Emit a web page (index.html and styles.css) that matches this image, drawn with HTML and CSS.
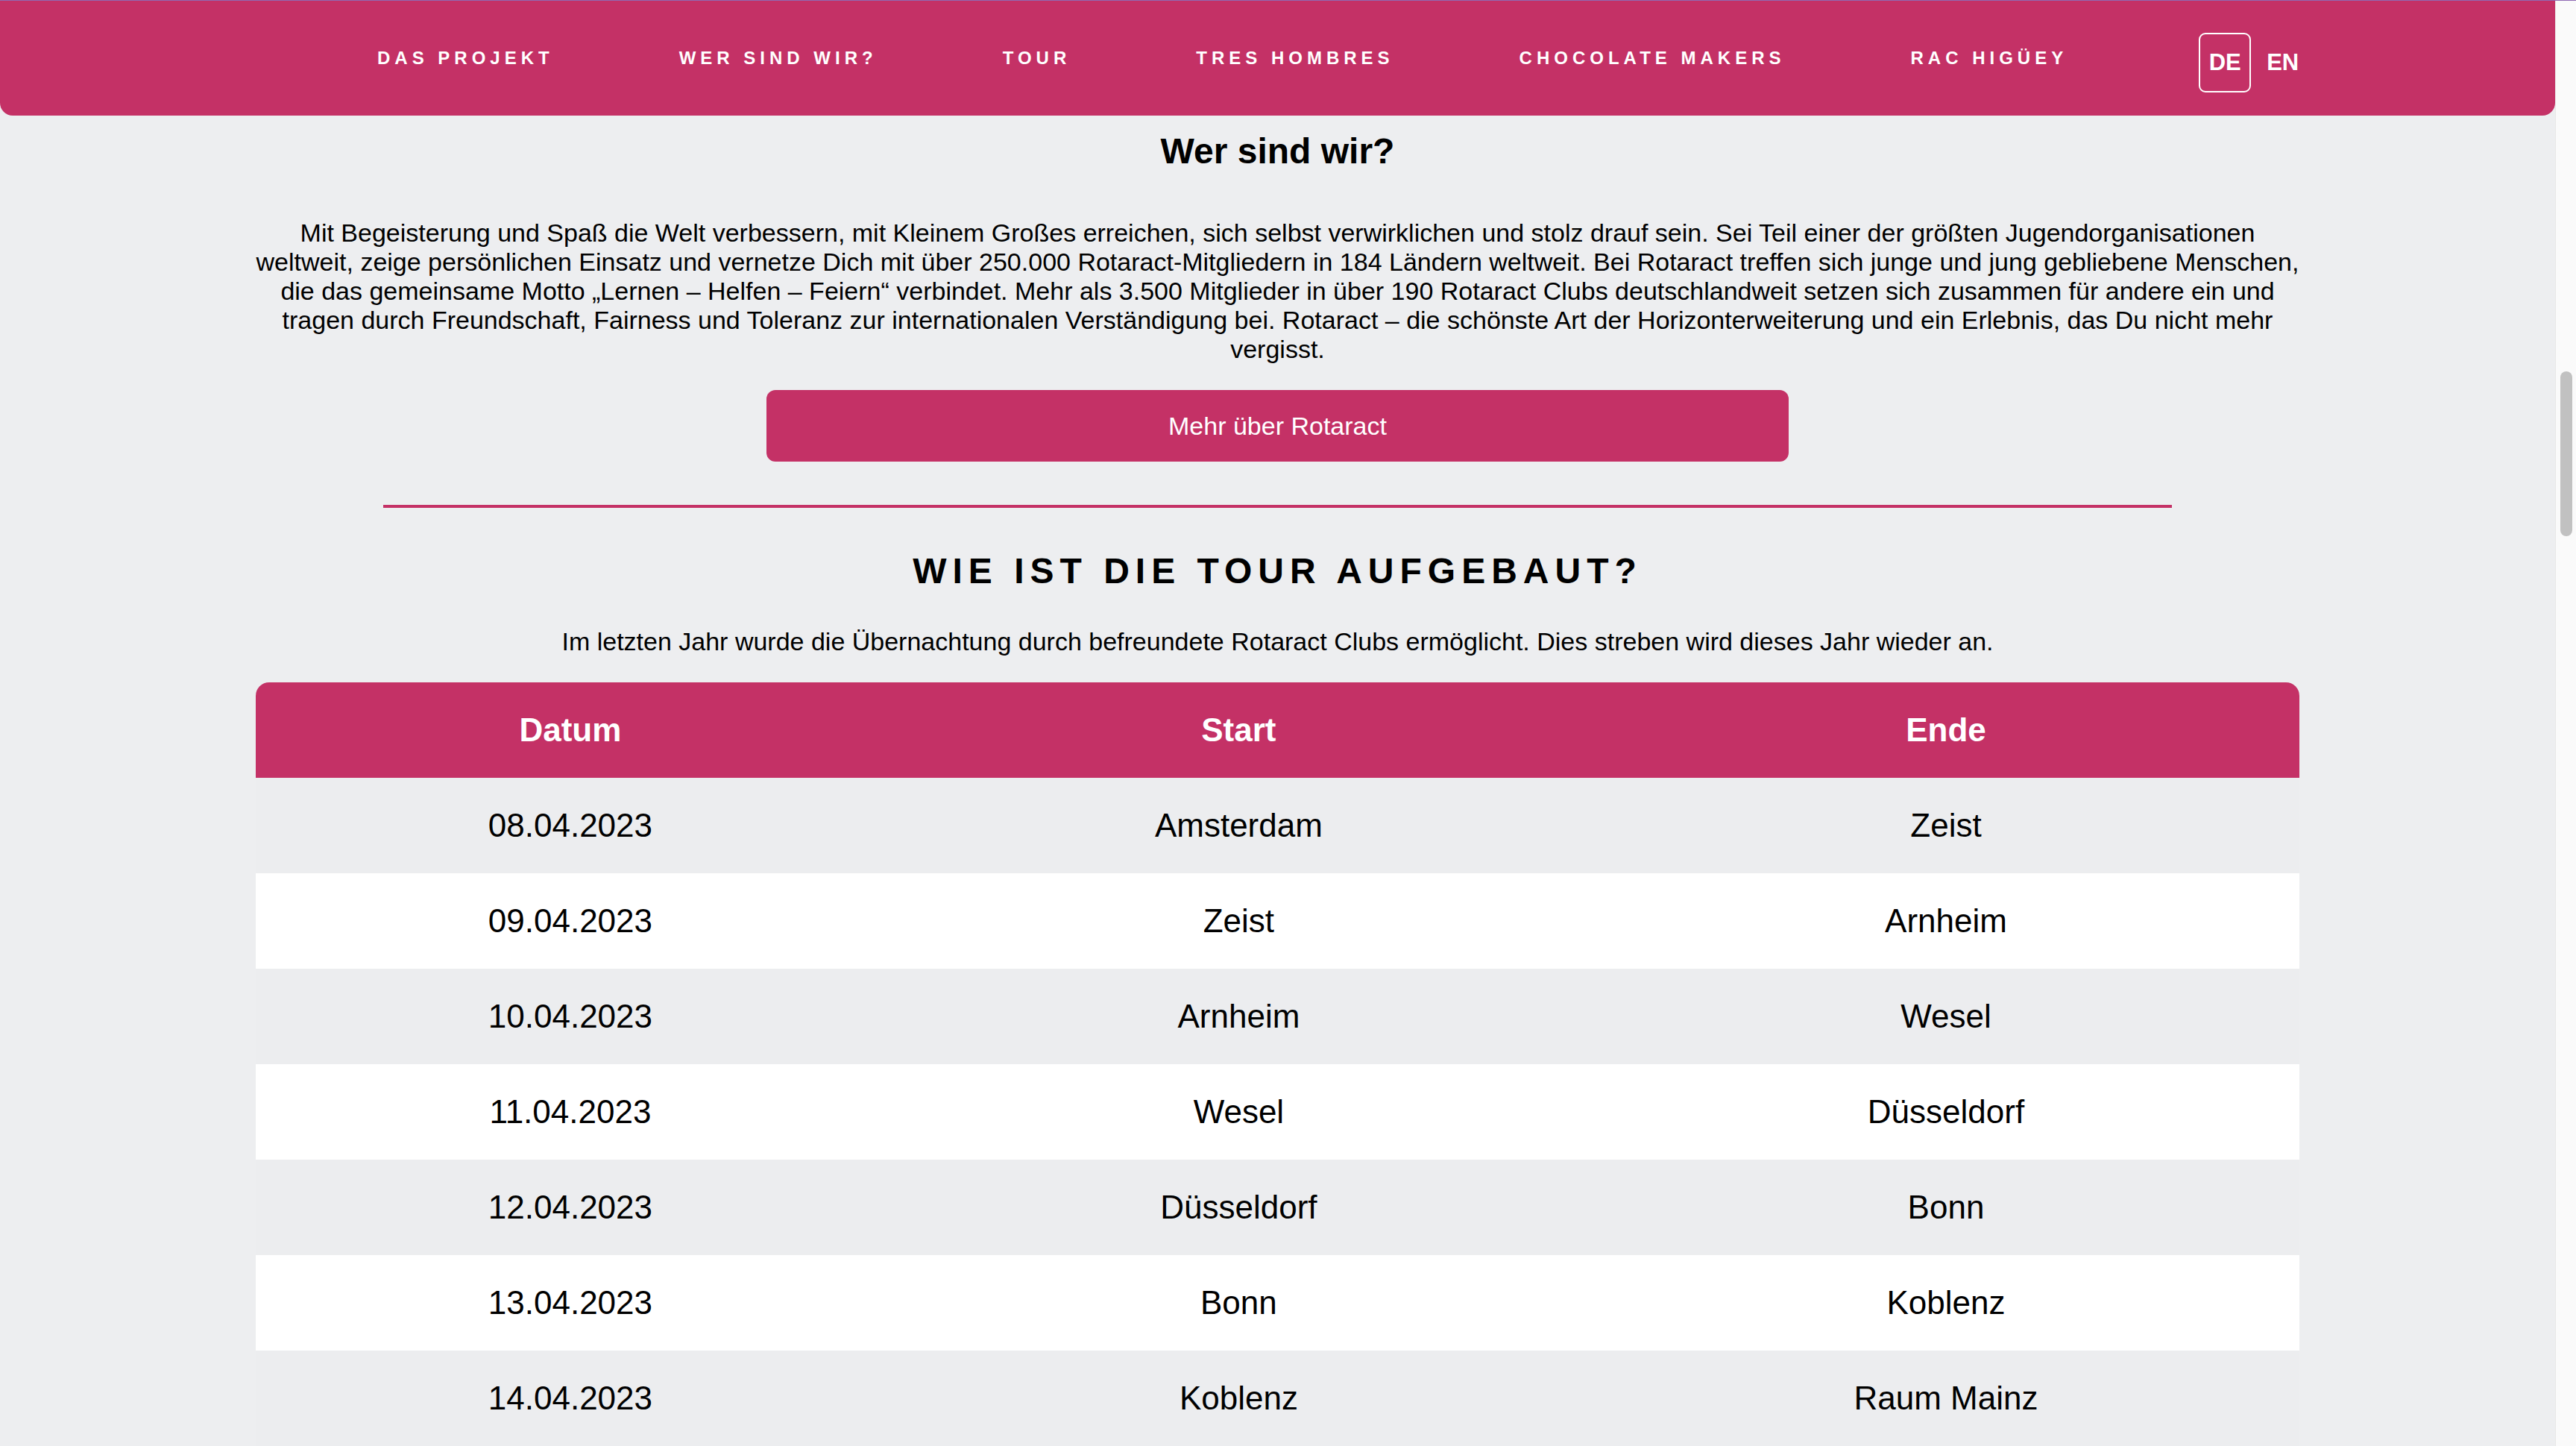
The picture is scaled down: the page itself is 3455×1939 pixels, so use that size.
FILE: index.html
```html
<!DOCTYPE html>
<html lang="de">
<head>
<meta charset="utf-8">
<title>Wer sind wir?</title>
<link rel="stylesheet" href="styles.css">
</head>
<body>
<div class="topline"></div>
<div class="viewport">
  <div class="page">
    <nav class="nav">
      <div class="nav-links">
        <a class="nav-link">DAS PROJEKT</a>
        <a class="nav-link">WER SIND WIR?</a>
        <a class="nav-link">TOUR</a>
        <a class="nav-link">TRES HOMBRES</a>
        <a class="nav-link">CHOCOLATE MAKERS</a>
        <a class="nav-link">RAC HIGÜEY</a>
      </div>
      <div class="lang">
        <span class="lang-item lang-active">DE</span>
        <span class="lang-item">EN</span>
      </div>
    </nav>

    <main class="content">
      <section class="about">
        <h2 class="about-title">Wer sind wir?</h2>
        <p class="about-text">Mit Begeisterung und Spaß die Welt verbessern, mit Kleinem Großes erreichen, sich selbst verwirklichen und stolz drauf sein. Sei Teil einer der größten Jugendorganisationen weltweit, zeige persönlichen Einsatz und vernetze Dich mit über 250.000 Rotaract-Mitgliedern in 184 Ländern weltweit. Bei Rotaract treffen sich junge und jung gebliebene Menschen, die das gemeinsame Motto „Lernen – Helfen – Feiern“ verbindet. Mehr als 3.500 Mitglieder in über 190 Rotaract Clubs deutschlandweit setzen sich zusammen für andere ein und tragen durch Freundschaft, Fairness und Toleranz zur internationalen Verständigung bei. Rotaract – die schönste Art der Horizonterweiterung und ein Erlebnis, das Du nicht mehr vergisst.</p>
        <a class="btn">Mehr über Rotaract</a>
      </section>

      <hr class="divider">

      <section class="tour">
        <h2 class="tour-title">WIE IST DIE TOUR AUFGEBAUT?</h2>
        <p class="tour-text">Im letzten Jahr wurde die Übernachtung durch befreundete Rotaract Clubs ermöglicht. Dies streben wird dieses Jahr wieder an.</p>
        <table class="tour-table">
          <colgroup>
            <col class="col-date">
            <col class="col-start">
            <col class="col-end">
          </colgroup>
          <thead>
            <tr><th>Datum</th><th>Start</th><th>Ende</th></tr>
          </thead>
          <tbody>
            <tr><td>08.04.2023</td><td>Amsterdam</td><td>Zeist</td></tr>
            <tr><td>09.04.2023</td><td>Zeist</td><td>Arnheim</td></tr>
            <tr><td>10.04.2023</td><td>Arnheim</td><td>Wesel</td></tr>
            <tr><td>11.04.2023</td><td>Wesel</td><td>Düsseldorf</td></tr>
            <tr><td>12.04.2023</td><td>Düsseldorf</td><td>Bonn</td></tr>
            <tr><td>13.04.2023</td><td>Bonn</td><td>Koblenz</td></tr>
            <tr><td>14.04.2023</td><td>Koblenz</td><td>Raum Mainz</td></tr>
          </tbody>
        </table>
      </section>
    </main>
  </div>
  <div class="scrollbar"><div class="thumb"></div></div>
</div>
</body>
</html>
```
FILE: styles.css
```css
* { box-sizing: border-box; }

html, body {
  margin: 0;
  padding: 0;
  height: 1939px;
  overflow: hidden;
}

body {
  background: #edeef0;
  font-family: "Liberation Sans", Arial, Helvetica, sans-serif;
  color: #000;
}

.topline {
  position: fixed;
  top: 0;
  left: 0;
  right: 0;
  height: 1px;
  background: #8f6bb3;
  z-index: 10;
}

.viewport {
  display: flex;
  height: 1939px;
}

.page {
  flex: 1;
  min-width: 0;
  display: flex;
  flex-direction: column;
}

.scrollbar {
  width: 28px;
  flex: none;
  background: #fafafa;
  border-left: 1px solid #e8e8e8;
  padding: 498px 5px 0 6px;
}

.thumb {
  width: 16px;
  height: 221px;
  border-radius: 8px;
  background: #c1c1c1;
}

/* NAV */
.nav {
  height: 155px;
  flex: none;
  background: #c43166;
  border-radius: 0 0 17px 17px;
  display: flex;
  align-items: center;
  padding-left: 506px;
}

.nav-links {
  display: flex;
  align-items: center;
  gap: 168px;
}

.nav-link {
  color: #fff;
  font-size: 24px;
  font-weight: 700;
  letter-spacing: 6px;
  white-space: nowrap;
}

.lang {
  display: flex;
  align-items: center;
  gap: 21px;
  margin-left: 176px;
  margin-top: 12px;
}

.lang-item {
  color: #fff;
  font-size: 31px;
  font-weight: 700;
}

.lang-active {
  width: 70px;
  height: 80px;
  border: 2px solid #fff;
  border-radius: 9px;
  display: flex;
  align-items: center;
  justify-content: center;
}

/* CONTENT */
.content {
  display: flex;
  flex-direction: column;
  align-items: center;
}

.about {
  width: 80%;
  display: flex;
  flex-direction: column;
  align-items: center;
  padding-top: 20px;
}

.about-title {
  margin: 0;
  font-size: 48px;
  line-height: 55px;
  font-weight: 700;
  text-align: center;
}

.about-text {
  margin: 63px 0 0;
  font-size: 34px;
  line-height: 39px;
  text-align: center;
}

.btn {
  margin-top: 35px;
  width: 50%;
  height: 96px;
  background: #c43166;
  color: #fff;
  border-radius: 12px;
  font-size: 34px;
  display: flex;
  align-items: center;
  justify-content: center;
}

.divider {
  width: 70%;
  margin: 58px 0 0;
  border: 0;
  height: 4px;
  background: #c43166;
}

.tour {
  width: 80%;
  display: flex;
  flex-direction: column;
  align-items: center;
  padding-top: 57px;
}

.tour-title {
  margin: 0;
  font-size: 48px;
  line-height: 55px;
  font-weight: 700;
  letter-spacing: 8px;
  text-align: center;
}

.tour-text {
  margin: 48px 0 0;
  font-size: 34px;
  line-height: 39px;
  text-align: center;
}

.tour-table {
  margin-top: 35px;
  width: 100%;
  border-collapse: separate;
  border-spacing: 0;
  table-layout: fixed;
  font-size: 44px;
}

.col-date { width: 30.8%; }
.col-start { width: 34.6%; }
.col-end { width: 34.6%; }

.tour-table th {
  height: 128px;
  background: #c43166;
  color: #fff;
  font-weight: 700;
  text-align: center;
  padding: 0;
}

.tour-table th:first-child { border-top-left-radius: 18px; }
.tour-table th:last-child { border-top-right-radius: 18px; }

.tour-table td {
  height: 128px;
  text-align: center;
  padding: 0;
}

.tour-table tbody tr:nth-child(odd) td { background: #ecedef; }
.tour-table tbody tr:nth-child(even) td { background: #ffffff; }
```
